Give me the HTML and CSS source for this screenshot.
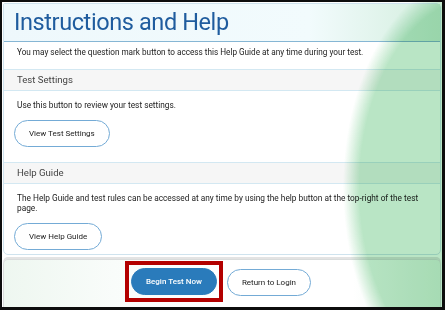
FILE: index.html
```html
<!DOCTYPE html>
<html>
<head>
<meta charset="utf-8">
<link rel="stylesheet" href="styles.css">
</head>
<body>
<div class="screen">
  <div class="card">
    <div class="card-head">
      <h1 class="title">Instructions and Help</h1>
    </div>
    <p class="intro">You may select the question mark button to access this Help Guide at any time during your test.</p>
    <div class="band">Test Settings</div>
    <div class="section">
      <p class="text">Use this button to review your test settings.</p>
      <button class="btn">View Test Settings</button>
    </div>
    <div class="band">Help Guide</div>
    <div class="section">
      <p class="text">The Help Guide and test rules can be accessed at any time by using the help button at the top-right of the test page.</p>
      <button class="btn">View Help Guide</button>
    </div>
  </div>
  <div class="footer">
    <div class="highlight"><button class="btn btn-primary">Begin Test Now</button></div>
    <button class="btn">Return to Login</button>
  </div>
  <div class="blob"></div>
</div>
</body>
</html>
```

FILE: styles.css
```css
html, body {
  margin: 0;
  padding: 0;
  background: #0d0d0d;
}
body {
  width: 445px;
  height: 310px;
  overflow: hidden;
  font-family: Roboto, "Liberation Sans", sans-serif;
}
.screen {
  position: relative;
  margin: 2px 3px 0 2px;
  height: 305px;
  background: #fff;
  overflow: hidden;
  padding: 1px 1px 0 1px;
  box-sizing: border-box;
}
.card {
  position: relative;
  border: 1px solid #cfe3ee;
  border-radius: 2px 5px 5px 5px;
  background: #fff;
  height: 252px;
  box-sizing: border-box;
}
.card-head {
  height: 38px;
  background: linear-gradient(90deg, #eef8fc 0%, #f2fbfd 70%, #d3eedd 100%);
  border-bottom: 1px solid #86b6d4;
  box-sizing: border-box;
  padding: 0 0 0 10px;
}
.title {
  margin: 0;
  font-weight: 400;
  font-size: 23.5px;
  letter-spacing: -0.4px;
  line-height: 36px;
  color: #1f5c9e;
}
.intro {
  margin: 0;
  padding: 5px 13px 0;
  height: 27px;
  box-sizing: border-box;
  font-size: 8.2px;
  line-height: 11px;
  color: #222;
}
.band {
  height: 22px;
  background: #f6f6f6;
  border-top: 1px solid #d3e8f2;
  border-bottom: 1px solid #d3e8f2;
  box-sizing: border-box;
  padding-left: 13px;
  font-size: 9.6px;
  line-height: 20px;
  color: #444;
}
.section {
  padding: 9px 10px 10px;
  height: 71px;
  box-sizing: border-box;
}
.text {
  margin: 0 0 10px 3px;
  font-size: 8.3px;
  line-height: 10px;
  color: #222;
}
.btn {
  font-family: Roboto, "Liberation Sans", sans-serif;
  font-size: 8px;
  color: #222;
  background: #fff;
  border: 1px solid #74abd6;
  border-radius: 14px;
  height: 27px;
  padding: 0 14px;
  cursor: pointer;
}
.footer {
  margin-top: 4px;
  height: 48px;
  border: 1px solid #d9dcdc;
  border-bottom: none;
  border-radius: 5px 5px 0 0;
  background: linear-gradient(90deg, #eef7f0 0%, #f9fcfa 25%, #fff 50%, #fff 80%, #e6f4e9 100%);
  display: flex;
  justify-content: center;
  align-items: flex-start;
  gap: 4px;
  padding: 1px 8px 0 0;
  box-sizing: border-box;
  box-shadow: 0 -2px 0 #e3e3e3;
}
.highlight {
  border: 4px solid #b30000;
  padding: 3px 2px;
  display: flex;
}
.btn-primary {
  background: #2a7bbb;
  color: #fff;
  border-color: #2a7bbb;
  font-weight: 500;
  padding: 0 14px;
}
.footer > .btn {
  margin-top: 8px;
  padding: 0 14px;
}
.blob {
  position: absolute;
  left: 341px;
  top: -30px;
  width: 274px;
  height: 430px;
  background: radial-gradient(ellipse closest-side at 50% 50%, #b9e5c5 88%, rgba(185,229,197,0) 100%);
  mix-blend-mode: multiply;
  pointer-events: none;
}
```
